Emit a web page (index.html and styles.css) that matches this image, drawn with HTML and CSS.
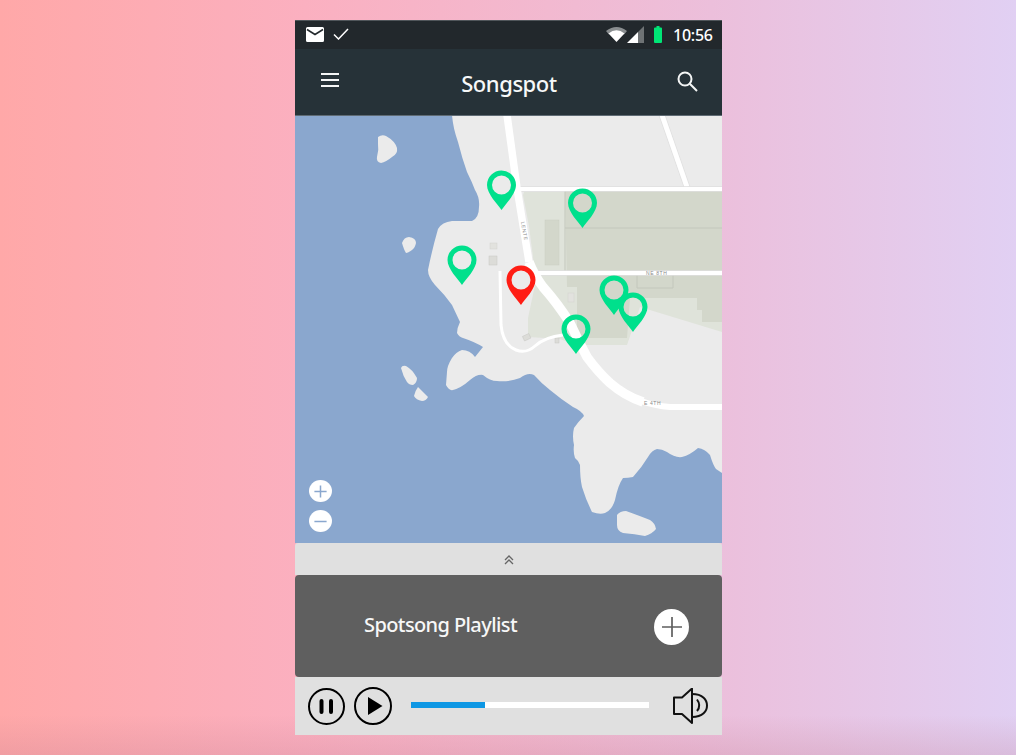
FILE: index.html
```html
<!DOCTYPE html>
<html lang="en">
<head>
<meta charset="utf-8">
<title>Songspot</title>
<link rel="stylesheet" href="styles.css">
</head>
<body>
<main class="phone">
  <div class="status">
    <div class="status-left">
      <svg class="ic-mail" viewBox="0 0 18 15"><path class="fill-white" d="M1.500 0h15A1.500 1.500 0 0 1 18 1.500v12a1.500 1.500 0 0 1-1.500 1.500h-15A1.500 1.500 0 0 1 0 13.500v-12A1.500 1.500 0 0 1 1.500 0z"/><path class="mail-flap" d="M1 2.500l8 5 8-5"/></svg>
      <svg class="ic-check" viewBox="0 0 16 12"><path class="check-line" d="M1 6.500l4.500 4.500L15 1"/></svg>
    </div>
    <div class="status-right">
      <svg class="ic-wifi" viewBox="0 0 21 16"><path class="wifi-dim" d="M0 5Q10.500-3 21 5l-3 3.500Q10.500 2 3 8.500z"/><path class="fill-white" d="M2.500 7.500Q10.500 1 18.500 7.500L10.500 16z"/></svg>
      <svg class="ic-signal" viewBox="0 0 17 17"><path class="signal-dim" d="M17 0v17h-6V6z"/><path class="fill-white" d="M11 6v11H0z"/></svg>
      <svg class="ic-batt" viewBox="0 0 8 17"><path class="fill-green" d="M2.500 0h3v1.500H7a1 1 0 0 1 1 1V16a1 1 0 0 1-1 1H1a1 1 0 0 1-1-1V2.500a1 1 0 0 1 1-1h1.500z"/></svg>
      <span class="clock">10:56</span>
    </div>
  </div>
  <header class="appbar">
    <svg class="ic-menu" viewBox="0 0 18 14"><path class="bar-line" d="M0 1h18M0 7h18M0 13h18"/></svg>
    <h1 class="title">Songspot</h1>
    <svg class="ic-search" viewBox="0 0 21 21"><circle class="search-line" cx="8" cy="8" r="6.500"/><path class="search-line" d="M12.800 12.800L20 20"/></svg>
  </header>
  <section class="map">
    <svg class="map-art" viewBox="295 116 427 427">
      <defs>
        <path id="pin" d="M0 25C-4 19-14.500 9-14.500 0A14.500 14.500 0 1 1 14.500 0C14.500 9 4 19 0 25ZM-9.500 0A9.500 9.500 0 1 0 9.500 0A9.500 9.500 0 1 0-9.500 0Z"/>
      </defs>
      <rect class="water" x="295" y="115" width="427" height="428"/>
      <path class="land" d="M452 115Q453 128 458 142Q462 158 467 172Q472 182 475 190Q480 198 479 207Q479 218 472 221L452 221Q442 222 438 229Q432 250 428 270Q428 277 435 285Q445 295 452 305L460 322Q457 328 457 333Q459 337 463 338Q475 342 483 347L475 357Q470 350 462 350Q456 352 452 358Q447 366 447 372L446 385Q449 391 453 390Q461 388 470 380Q477 374 483 375Q490 381 497 381Q510 382 520 378Q528 372 534 375Q542 384 550 390Q562 400 573 407Q582 411 584 416Q578 422 574 428Q572 436 574 445Q573 452 575 458Q579 461 580 465Q580 478 582 487Q586 500 592 512Q600 515 605 513Q612 510 615 500Q618 485 623 478Q628 478 633 477Q642 467 648 457Q652 450 657 449Q662 449 667 452Q675 458 682 457Q690 455 698 448Q705 449 710 455Q713 465 716 469L722 473V115z"/>
      <path class="land" d="M378 137Q382 134 386 136Q395 141 397 148Q398 154 392 157Q386 162 381 163Q376 162 377 157Q379 150 378 144z"/>
      <path class="land" d="M402 243Q404 237 409 237Q416 238 416 243Q415 248 412 250Q408 253 406 253Q404 250 402 243z"/>
      <path class="land" d="M401 368Q402 365 406 366Q412 369 417 378Q417 383 413 385Q409 385 407 382Q403 376 401 368z"/>
      <path class="land" d="M418 387L428 397Q426 401 422 401Q416 400 414 396Q415 391 418 387z"/>
      <path class="land" d="M617 515Q620 511 626 511Q640 516 650 520Q655 523 656 529Q652 534 645 536Q635 534 623 533Q617 531 617 525z"/>

      <path class="green-light" d="M524 192H722V332L640 307L627 345H578L556 338H545L528 337V318L535 285Q533 240 523 195z"/>
      <path class="green-dark" d="M565 191H722V322H702V310H697V298H630L627 338H577V287H567z"/>
      <path class="green-line" d="M565 228H722M545 242H559M565 191V273"/>
      <rect class="green-bld" x="545" y="220" width="14" height="45"/>
      <path class="green-line" d="M637 275V288H673V275"/>
      <rect class="bld" x="568" y="293" width="6" height="9"/>
      <rect class="bld" x="490" y="243" width="7" height="6"/>
      <rect class="bld2" x="489" y="256" width="8" height="9"/>
      <rect class="bld2" x="523" y="335" width="7" height="5" transform="rotate(-25 526 337)"/>
      <rect class="bld2" x="555" y="338" width="4" height="5"/>

      <path class="road-edge road-branch-edge" d="M662 115L687 187"/>
      <path class="road-branch" d="M662 115L687 187"/>
      <path class="road-edge" d="M517 189H722M537 273H722"/>
      <path class="road-thin" d="M517 189H722M537 273H722"/>
      <path class="road-local" d="M500 271L501 325Q503 345 516 350Q526 354 535 346Q545 337 563 335"/>
      <path class="road-main road-top" d="M507 115L517 188L529 262"/>
      <path class="road-main road-mid" d="M529 262Q534 275 543 287Q558 304 570 323Q578 340 587 357Q598 372 610 383Q625 396 643 402"/>
      <path class="road-main road-tail" d="M641 401Q655 406 670 407H722"/>
      <text class="road-label" transform="translate(521 222) rotate(80)">LENTE</text>
      <text class="road-label" x="646" y="275">NE 8TH</text>
      <text class="road-label" x="644" y="405">E 4TH</text>

      <use class="pin" href="#pin" x="501.500" y="185"/>
      <use class="pin" href="#pin" x="582.500" y="203"/>
      <use class="pin" href="#pin" x="462" y="260"/>
      <use class="pin pin-red" href="#pin" x="521" y="280"/>
      <use class="pin" href="#pin" x="614" y="290"/>
      <use class="pin" href="#pin" x="633" y="307"/>
      <use class="pin" href="#pin" x="576" y="329"/>
    </svg>
    <div class="zoom-controls">
      <div class="zoom-btn"><svg class="ic-zoom" viewBox="0 0 16 16"><path class="zoom-line" d="M1.500 8h13M8 1.500v13"/></svg></div>
      <div class="zoom-btn"><svg class="ic-zoom" viewBox="0 0 16 16"><path class="zoom-line" d="M1.500 8h13"/></svg></div>
    </div>
  </section>
  <div class="handle">
    <svg class="ic-chev" viewBox="0 0 10 10"><path class="chev-line" d="M1 5l4-4 4 4M1 9l4-4 4 4"/></svg>
  </div>
  <section class="playlist">
    <h2 class="playlist-title">Spotsong Playlist</h2>
    <div class="add-btn"><svg class="ic-add" viewBox="0 0 22 22"><path class="add-line" d="M1 11h20M11 1v20"/></svg></div>
  </section>
  <footer class="player">
    <svg class="ic-pause" viewBox="0 0 37 37"><circle class="ring" cx="18.500" cy="18.500" r="17.500"/><path class="pause-line" d="M13.500 13v11M23 13v11"/></svg>
    <svg class="ic-play" viewBox="0 0 38 38"><circle class="ring" cx="19" cy="19" r="18"/><path class="fill-black" d="M14 10l14.500 9L14 28z"/></svg>
    <div class="progress"><div class="progress-fill"></div></div>
    <svg class="ic-vol" viewBox="0 0 36 36"><path class="vol-line" d="M2 9.500H10L20 0.500V35L10 26H2z"/><path class="vol-line" d="M25 11.500Q29.500 17.500 25 23M20 6C31 6 35 12 35 17.500C35 23 31 29 20 29"/></svg>
  </footer>
</main>
</body>
</html>
```
FILE: styles.css
```css
* { box-sizing: border-box; }
html, body { margin: 0; height: 100%; }
body {
  height: 755px;
  overflow: hidden;
  padding: 20px 0 0 295px;
  background:
    linear-gradient(to top, rgba(190, 120, 140, 0.22), rgba(190, 120, 140, 0) 40px),
    linear-gradient(to right, #ffa8a8 0%, #fbb0c0 30%, #ecbfdb 70%, #e1d0f3 100%);
  font-family: "Noto Sans", "Open Sans", sans-serif;
}
svg { display: block; flex: none; }
.phone { width: 427px; height: 715px; display: flex; flex-direction: column; }

.status {
  height: 29px; background: #22282c; color: #fff; border-top: 1px solid #50565a;
  display: flex; justify-content: space-between; align-items: center;
  padding: 0 9px 0 11px;
}
.status-left { display: flex; align-items: center; gap: 9px; margin-top: -2px; }
.status-right { display: flex; align-items: center; }
.ic-mail { width: 18px; height: 15px; }
.ic-check { width: 16px; height: 12px; }
.ic-wifi { width: 21px; height: 16px; margin: -2px 0 0 0; }
.ic-signal { width: 17px; height: 17px; margin-top: -2px; }
.ic-batt { width: 8px; height: 17px; margin: -2px 11px 0 10px; }
.clock { font-size: 16px; font-weight: 500; line-height: 20px; width: 40px; letter-spacing: -0.25px; }
.fill-white { fill: #fff; }
.fill-green { fill: #00e676; }
.fill-black { fill: #000; }
.mail-flap { fill: none; stroke: #22282c; stroke-width: 1.5; }
.check-line { fill: none; stroke: #fff; stroke-width: 1.5; }
.wifi-dim { fill: #8a8e90; }
.signal-dim { fill: #6f7375; }

.appbar {
  height: 67px; background: #263238; border-bottom: 1px solid #5f6b74;
  display: flex; align-items: center; justify-content: space-between;
  padding: 0 24px 0 26px; color: #fff;
}
.ic-menu { width: 18px; height: 14px; margin-top: -4px; }
.ic-search { width: 21px; height: 21px; margin-top: -1px; }
.bar-line, .search-line { fill: none; stroke: #f4f6f6; stroke-width: 2; }
.title {
  margin: 2px 0 0 2px; font-size: 22px; font-weight: 500; line-height: 30px;
  color: #f6f8f8; letter-spacing: -0.45px;
}

.map { height: 427px; position: relative; }
.map-art { width: 427px; height: 427px; }
.water { fill: #8aa7ce; }
.land { fill: #ebebeb; }
.green-light { fill: #dfe3da; }
.green-dark { fill: #d3d7cb; }
.green-bld { fill: #d3d7cb; stroke: #c9cdc2; stroke-width: 0.5; }
.green-line { fill: none; stroke: #c3c7bc; stroke-width: 1; }
.bld { fill: #e2e2de; stroke: #d2d2ce; stroke-width: 0.5; }
.bld2 { fill: #dcdcd8; stroke: #c8c8c4; stroke-width: 0.5; }
.road-edge { fill: none; stroke: #e0e0e0; stroke-width: 5.500; }
.road-branch-edge { stroke-width: 6.500; }
.road-branch { fill: none; stroke: #fff; stroke-width: 5; }
.road-thin { fill: none; stroke: #fff; stroke-width: 4; }
.road-local { fill: none; stroke: #fff; stroke-width: 3; }
.road-main { fill: none; stroke: #fff; }
.road-top { stroke-width: 7.500; }
.road-mid { stroke-width: 9.500; }
.road-tail { stroke-width: 6; }
.road-label { font-size: 5px; fill: #8a8a8a; letter-spacing: 0.6px; font-family: "Liberation Sans", sans-serif; }
.pin { fill: #00e08c; fill-rule: evenodd; }
.pin-red { fill: #ff1d14; }

.zoom-controls {
  position: absolute; left: 14px; bottom: 11px;
  display: flex; flex-direction: column; gap: 8px;
}
.zoom-btn {
  width: 23px; height: 22px; border-radius: 50%; background: #fff;
  display: flex; align-items: center; justify-content: center;
}
.ic-zoom { width: 15px; height: 15px; }
.zoom-line { fill: none; stroke: #8aa7ce; stroke-width: 1.600; }

.handle {
  height: 32px; background: #e0e0e0; border-radius: 3px 3px 0 0;
  display: flex; align-items: center; justify-content: center; padding: 1px 0 0 1px;
}
.ic-chev { width: 10px; height: 10px; }
.chev-line { fill: none; stroke: #666; stroke-width: 1.300; }

.playlist {
  height: 102px; background: #5f5f5f; border-radius: 4px;
  display: flex; align-items: center; justify-content: space-between;
  padding: 0 33px 0 69px;
}
.playlist-title { margin: -3px 0 0 0; font-size: 20px; font-weight: 500; line-height: 26px; color: #f7f7f7; letter-spacing: -0.6px; }
.add-btn {
  width: 35px; height: 36px; border-radius: 50%; background: #fff; margin-top: 2px;
  display: flex; align-items: center; justify-content: center;
}
.ic-add { width: 22px; height: 22px; }
.add-line { fill: none; stroke: #5f5f5f; stroke-width: 1.700; }

.player {
  height: 58px; background: #e0e0e0; display: flex; align-items: center;
  padding: 0 14px 0 13px;
}
.ic-pause { width: 37px; height: 37px; margin-right: 9px; }
.ic-play { width: 38px; height: 38px; margin-right: 19px; }
.ring { fill: none; stroke: #000; stroke-width: 2; }
.pause-line { fill: none; stroke: #000; stroke-width: 4; stroke-linecap: round; }
.progress { width: 239px; height: 6px; background: #fff; margin-top: -2px; }
.progress-fill { width: 31%; height: 100%; background: #0e97e4; }
.ic-vol { width: 36px; height: 36px; margin-left: 23px; }
.vol-line { fill: none; stroke: #111; stroke-width: 2; stroke-linejoin: round; }
```
